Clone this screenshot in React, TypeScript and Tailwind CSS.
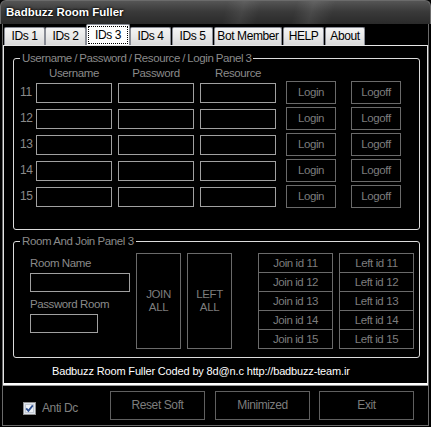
import React from 'react'

const tabs = [
  { label: 'IDs 1', cls: 'w-[41px]' },
  { label: 'IDs 2', cls: 'w-[41px]' },
  { label: 'IDs 3', cls: 'w-[44px]', active: true },
  { label: 'IDs 4', cls: 'w-[41px]' },
  { label: 'IDs 5', cls: 'w-[41px] ml-[1px]' },
  { label: 'Bot Member', cls: 'w-[68px] ml-[1px]' },
  { label: 'HELP', cls: 'w-[41px] ml-[1px]' },
  { label: 'About', cls: 'w-[40px] ml-[1px]' },
]

const ids = [11, 12, 13, 14, 15]

function Tab({ label, cls, active }: { label: string; cls: string; active?: boolean }) {
  if (active) {
    return (
      <div className={`${cls} h-[21px] bg-white border border-b-0 border-[#898c95] rounded-t-[2px] p-px`}>
        <div className="h-full border border-dotted border-black flex items-center justify-center text-black whitespace-nowrap">
          {label}
        </div>
      </div>
    )
  }
  return (
    <div
      className={`${cls} h-[18px] bg-[linear-gradient(to_bottom,#f4f4f4,#e9e9e9_50%,#d8d8d8)] border border-b-0 border-[#898c95] rounded-t-[2px] flex items-center justify-center text-black whitespace-nowrap`}
    >
      {label}
    </div>
  )
}

export default function App() {
  return (
    <div className="w-[431px] h-[427px] bg-black flex flex-col overflow-hidden text-[11.5px] leading-[15px] tracking-[-0.4px] font-['Liberation_Sans',Arial,sans-serif]">
      {/* title bar */}
      <div className="h-[24px] shrink-0 rounded-t-[6px] border border-b-0 border-[#6b6b6b] bg-[linear-gradient(105deg,transparent_52%,rgba(255,255,255,0.07)_56%,transparent_60%,transparent_68%,rgba(255,255,255,0.09)_72%,transparent_77%),linear-gradient(to_bottom,#555,#3a3a3a_45%,#2a2a2a)] flex items-center pl-[5px]">
        <span className="font-bold text-[11.5px] tracking-normal text-white [text-shadow:0_0_3px_#000,0_0_2px_#000]">
          Badbuzz Room Fuller
        </span>
      </div>

      {/* window body */}
      <div className="flex-1 mx-[2px] mb-px border-x border-b border-[#6a6a6a] flex flex-col">
        {/* tab strip */}
        <div className="h-[21px] shrink-0 flex items-end pl-px text-[12px]">
          {tabs.map((t) => (
            <Tab key={t.label} {...t} />
          ))}
        </div>

        {/* tab page */}
        <div className="h-[340px] shrink-0 border border-[#e6e6e6] border-b-2 border-b-white shadow-[0_1px_0_#9a9a9a] flex flex-col text-[#8a8a8a]">
          <fieldset className="mt-[5px] ml-[9px] w-[407px] border border-[#dcdcdc] rounded-[3px] pl-[6px] pb-[21px]">
            <legend className="px-[2px] [word-spacing:-0.5px]">Username / Password / Resource / Login Panel 3</legend>
            <div className="flex h-[15px] pl-[16px]">
              <span className="w-[76px] text-center">Username</span>
              <span className="w-[76px] ml-[6px] text-center">Password</span>
              <span className="w-[76px] ml-[6px] text-center">Resource</span>
            </div>
            <div className="flex flex-col gap-[3px]">
              {ids.map((id) => (
                <div key={id} className="flex items-center h-[23px]">
                  <span className="w-[16px] text-[12px]">{id}</span>
                  <input className="w-[76px] h-[20px] bg-black border border-[#a0a0a0] outline-none" />
                  <input className="w-[76px] h-[20px] ml-[6px] bg-black border border-[#a0a0a0] outline-none" />
                  <input className="w-[76px] h-[20px] ml-[6px] bg-black border border-[#a0a0a0] outline-none" />
                  <button className="w-[50px] h-[23px] ml-[10px] bg-black border border-[#6a6a6a] text-[#7d7d7d]">
                    Login
                  </button>
                  <button className="w-[50px] h-[23px] ml-[15px] bg-black border border-[#6a6a6a] text-[#7d7d7d]">
                    Logoff
                  </button>
                </div>
              ))}
            </div>
          </fieldset>

          <fieldset className="mt-[4px] ml-[9px] w-[407px] border border-[#dcdcdc] rounded-[3px] pl-[6px] pt-[4px] pb-[8px]">
            <legend className="px-[2px]">Room And Join Panel 3</legend>
            <div className="flex items-start">
              <div className="ml-[10px] w-[100px] flex flex-col">
                <span className="mt-[3px]">Room Name</span>
                <input className="mt-[2px] w-[100px] h-[19px] bg-black border border-[#a0a0a0] outline-none" />
                <span className="mt-[5px]">Password Room</span>
                <input className="mt-[2px] w-[68px] h-[19px] bg-black border border-[#a0a0a0] outline-none" />
              </div>
              <button className="ml-[6px] w-[45px] h-[96px] bg-black border border-[#6a6a6a] text-[#7d7d7d] leading-[13px]">
                JOIN
                <br />
                ALL
              </button>
              <button className="ml-[6px] w-[45px] h-[96px] bg-black border border-[#6a6a6a] text-[#7d7d7d] leading-[13px]">
                LEFT
                <br />
                ALL
              </button>
              <div className="ml-[26px] w-[75px] flex flex-col border border-[#6a6a6a] divide-y divide-[#6a6a6a]">
                {ids.map((id) => (
                  <button key={id} className="h-[19px] last:h-[18px] bg-black text-[#7d7d7d] leading-[18px]">
                    Join id {id}
                  </button>
                ))}
              </div>
              <div className="ml-[6px] w-[75px] flex flex-col border border-[#6a6a6a] divide-y divide-[#6a6a6a]">
                {ids.map((id) => (
                  <button key={id} className="h-[19px] last:h-[18px] bg-black text-[#7d7d7d] leading-[18px]">
                    Left id {id}
                  </button>
                ))}
              </div>
            </div>
          </fieldset>

          <p className="mt-[7px] pl-[48px] text-[11px] leading-[13px] tracking-[-0.15px] text-white">
            Badbuzz Room Fuller Coded by 8d@n.c http://badbuzz-team.ir
          </p>
        </div>

        {/* bottom bar */}
        <div className="flex-1 flex items-start pl-[20px] text-[#7d7d7d] text-[12px]">
          <label className="w-[87px] mt-[16px] flex items-center">
            <svg width="13" height="13" viewBox="0 0 13 13" className="shrink-0">
              <rect x="0.5" y="0.5" width="12" height="12" fill="#dde4ee" stroke="#8f8f8f" />
              <rect x="2.5" y="2.5" width="8" height="8" fill="#eef2f7" stroke="#c4cad3" />
              <path d="M3.2 6.4 L5.4 8.8 L9.8 3.4" fill="none" stroke="#2c4f91" strokeWidth="1.8" />
            </svg>
            <span className="ml-[6px] text-[#808080]">Anti Dc</span>
          </label>
          <button className="mt-[6px] w-[95px] h-[29px] bg-black border border-[#5f5f5f]">Reset Soft</button>
          <button className="mt-[6px] ml-[10px] w-[95px] h-[29px] bg-black border border-[#5f5f5f]">Minimized</button>
          <button className="mt-[6px] ml-[9px] w-[95px] h-[29px] bg-black border border-[#5f5f5f]">Exit</button>
        </div>
      </div>
    </div>
  )
}
